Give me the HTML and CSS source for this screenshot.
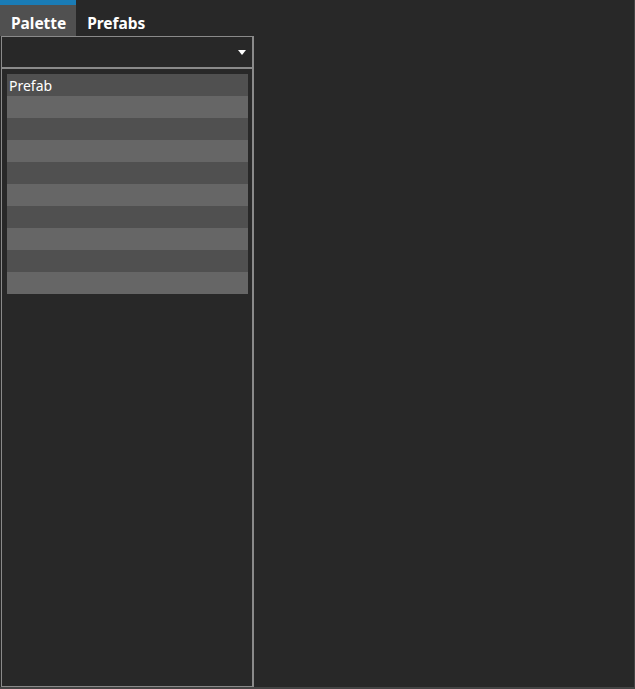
FILE: index.html
```html
<!DOCTYPE html>
<html lang="en">
<head>
  <meta charset="UTF-8">
  <title>Palette</title>
  <link rel="stylesheet" href="styles.css">
</head>
<body>
  <div class="window">
    <div class="tabs">
      <div class="tab active">Palette</div>
      <div class="tab">Prefabs</div>
    </div>

    <div class="panel">
      <div class="dropdown">
        <span class="arrow"></span>
      </div>
      <div class="list-area">
        <ul class="list">
          <li>Prefab</li>
          <li></li>
          <li></li>
          <li></li>
          <li></li>
          <li></li>
          <li></li>
          <li></li>
          <li></li>
          <li></li>
        </ul>
      </div>
    </div>
  </div>
</body>
</html>
```

FILE: styles.css
```css
body, html {
  margin: 0;
  padding: 0;
  width: 100%;
  height: 100%;
  background-color: #282828;
  color: #fff;
  font-family: "Noto Sans", "Open Sans", sans-serif;
}

.window {
  box-sizing: border-box;
  height: 689px;
  border-right: 1px solid #444;
  border-bottom: 2px solid #444;
  display: flex;
  flex-direction: column;
}

.tabs {
  display: flex;
  height: 36px;
}

.tab {
  box-sizing: border-box;
  height: 36px;
  padding: 7px 10px 0 11px;
  border-top: 5px solid transparent;
  font-size: 15.5px;
  font-weight: bold;
  letter-spacing: -0.05px;
  line-height: 22px;
}

.tab.active {
  background-color: #505050;
  border-top-color: #1a7cb6;
}

.panel {
  box-sizing: border-box;
  width: 253px;
  margin-left: 1px;
  flex: 1;
  border: 1px solid #8a8a8a;
  border-right-width: 2px;
  display: flex;
  flex-direction: column;
}

.dropdown {
  height: 30px;
  border-bottom: 2px solid #8a8a8a;
  display: flex;
  justify-content: flex-end;
  align-items: center;
  padding-right: 6px;
}

.arrow {
  width: 0;
  height: 0;
  border-left: 4px solid transparent;
  border-right: 4px solid transparent;
  border-top: 5px solid #fff;
}

.list-area {
  padding: 5px 4px 0 5px;
}

.list {
  list-style: none;
  margin: 0;
  padding: 0;
}

.list li {
  height: 22px;
  line-height: 24px;
  padding-left: 2px;
  font-size: 14px;
  background-color: #505050;
}

.list li:nth-child(even) {
  background-color: #666;
}
```
